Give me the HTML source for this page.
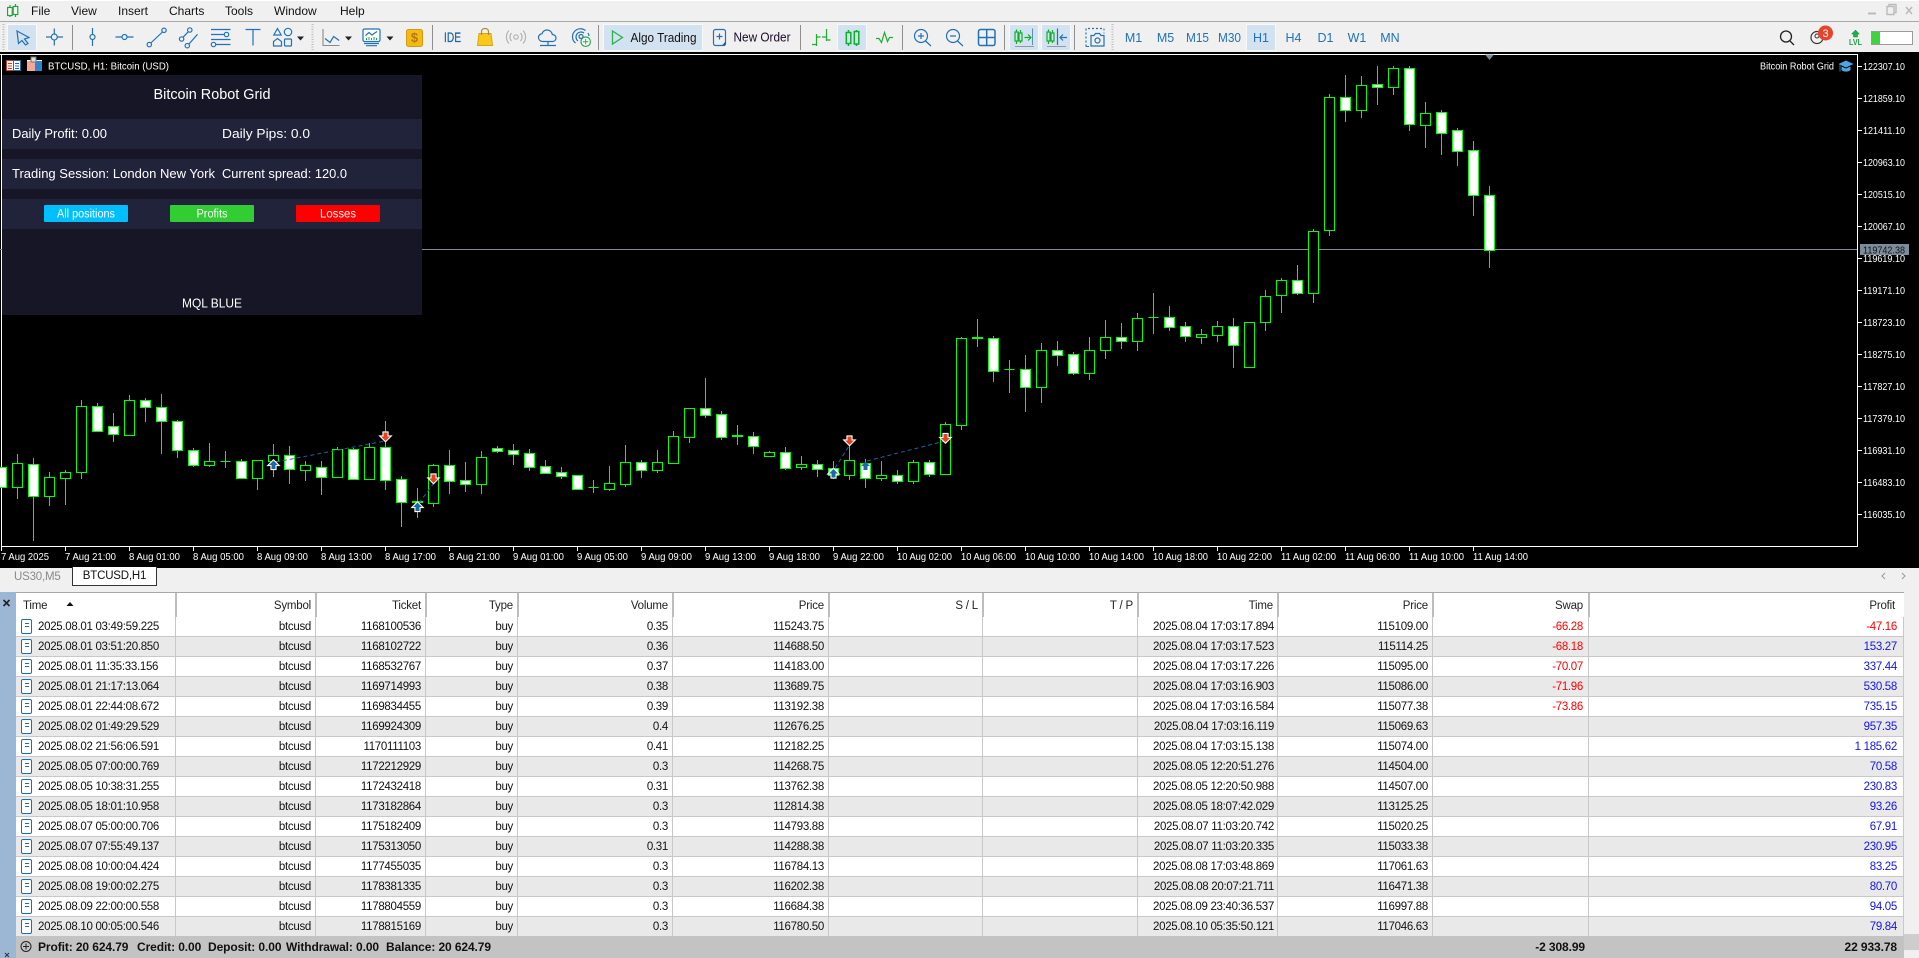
<!DOCTYPE html>
<html lang="en"><head><meta charset="utf-8"><title>MetaTrader 5</title>
<style>
html,body{margin:0;padding:0;background:#f0f0f0}
body{width:1919px;height:958px;position:relative;overflow:hidden;font-family:"Liberation Sans",sans-serif;color:#111}
svg{position:absolute;left:0;top:0;display:block}
svg text{font-family:"Liberation Sans",sans-serif}
.m{font-size:12px;fill:#111}
.tf{font-size:12.5px;fill:#2272b4;text-anchor:middle}
.p{font-size:10.5px;fill:#fff}
.pn{font-size:12.5px;fill:#fff}
.a{position:absolute}
#side{left:0;top:592px;width:16px;height:366px;background:#9cb7d4}
#head{left:16px;top:592px;width:1888px;height:25px;background:#fff;border-top:1px solid #a8a8a8;box-sizing:border-box}
#head span{position:absolute;top:0;height:24px;line-height:26px;font-size:11.5px;letter-spacing:-.2px;text-align:right;color:#222;border-right:2px solid #bdbdbd;box-sizing:border-box;padding-right:4px}
table{position:absolute;left:16px;top:617px;width:1888px;border-collapse:separate;border-spacing:0;table-layout:fixed;font-size:11.5px;letter-spacing:-.3px;background:#fff}
td{height:17px;padding:2px 4px 0 0;border-right:1px solid #c8c8c8;border-bottom:1px solid #c8c8c8;text-align:right;white-space:nowrap;line-height:17px;box-sizing:content-box;color:#111}
tr:nth-child(even) td{background:#e9e9e9}
td:first-child{text-align:left;padding:2px 0 0 22px;position:relative}
td:first-child i{position:absolute;left:5px;top:2px;width:9px;height:13px;border:1px solid #1f6fb0;border-radius:2px;background:#fff}
td:first-child i:before{content:"";position:absolute;left:2.5px;top:3px;width:4px;height:2px;border-top:1px solid #1f6fb0;border-bottom:1px solid #1f6fb0}
td:nth-child(9){padding-right:3px}td:nth-child(11){padding-right:5px}td:nth-child(12){padding-right:6px}
.r{color:#f00}.b{color:#1414e6}
#foot{left:16px;top:936px;width:1888px;height:22px;background:#c3c3c3;font-weight:bold;font-size:12px;letter-spacing:-.1px;line-height:22px}
#foot span{position:absolute;top:0;white-space:nowrap}
#tab{left:72px;top:567px;width:83px;height:18px;background:#fff;border:1px solid #333;border-top:0;text-align:center;font-size:11.5px;line-height:19px;letter-spacing:-.2px}
#us{left:14px;top:568px;font-size:11.5px;line-height:18px;color:#8a8a8a;letter-spacing:-.2px}
#sb{left:1904px;top:592px;width:15px;height:366px;background:#f0f0f0}
#th{left:1904px;top:934px;width:15px;height:16px;background:#cdcdcd}
</style></head><body>

<svg width="1919" height="568" viewBox="0 0 1919 568">
<rect x="0" y="0" width="1919" height="1" fill="#fff"/>
<rect x="0" y="21" width="1919" height="1" fill="#a9a9a9"/>
<!-- app icon -->
<g fill="none" stroke="#1fa535" stroke-width="1.2"><path d="M10 5V17M15.5 4V17"/><rect x="7.6" y="7.5" width="4.6" height="8" fill="#fff"/><rect x="13.2" y="6.5" width="4.6" height="8" fill="#fff"/></g>
<text class="m" x="31" y="15">File</text><text class="m" x="71" y="15">View</text><text class="m" x="118" y="15">Insert</text><text class="m" x="169" y="15">Charts</text><text class="m" x="225" y="15">Tools</text><text class="m" x="274" y="15">Window</text><text class="m" x="340" y="15">Help</text>
<!-- window controls -->
<path d="M1868 13.5h8" stroke="#bbb" stroke-width="2"/><path d="M1887 6.5h7v8h-7zM1889 6.5v-2h7v8h-2" fill="none" stroke="#bbb" stroke-width="1.4"/><path d="M1906 7l6 7M1912 7l-6 7" stroke="#bbb" stroke-width="1.6"/>
<!-- grips -->
<g stroke="#bcbcbc" stroke-width="2" stroke-dasharray="1 1.5"><path d="M3.5 24V51M312.5 24V51M1112.5 24V51"/></g>
<!-- active buttons -->
<g fill="#d3e2f0" stroke="#f6f9fc"><rect x="7.5" y="24.5" width="29" height="26"/><rect x="603.5" y="24.5" width="99" height="26"/><rect x="837.5" y="24.5" width="29" height="26"/><rect x="1009.5" y="24.5" width="29" height="26"/><rect x="1041.5" y="24.5" width="29" height="26"/><rect x="1246.5" y="24.5" width="29" height="26"/></g>
<!-- separators -->
<g stroke="#8f8f8f"><path d="M72.5 25V50M432.5 25V50M598.5 25V50M800.5 25V50M902.5 25V50M1004.5 25V50M1074.5 25V50"/></g>
<g fill="none" stroke="#2272b4" stroke-width="1.2">
<path d="M17 31L29 37.5 24.5 39 28 43.5 25.5 45 22 40.5 18.5 43.5Z" fill="#d3e2f0"/>
<path d="M46 37H51M57.5 37H63M54.3 28.5V34M54.3 40V45.5"/><circle cx="54.3" cy="37" r="3"/>
<path d="M92.5 28V34.5M92.5 39.5V46"/><circle cx="92.5" cy="37" r="2.5"/>
<path d="M115.5 37H122M127 37H133.5"/><circle cx="124.5" cy="37" r="2.5"/>
<path d="M150.8 43L162.5 32"/><circle cx="149.3" cy="44.6" r="2.2"/><circle cx="164" cy="30.3" r="2.2"/>
<path d="M183 37.3L188.2 31.8M189 44L197.5 34.3"/><circle cx="181.6" cy="39" r="2.2"/><circle cx="189.8" cy="30" r="2.2"/><circle cx="187.3" cy="45.7" r="2.2"/>
<path d="M211 29.5H230.5M211 34.5H224M211 39.5H230.5M216 44.5H230.5"/><circle cx="226.5" cy="34.5" r="2.2"/><circle cx="213.5" cy="44.5" r="2.2"/>
<path d="M245.5 29.5H260.5M253 29.5V45.5"/>
<path d="M277.5 28.5l3.7 6.5h-7.4z"/><circle cx="288" cy="32" r="3.7"/><path d="M277.5 38.5l4 3v4.5h-8v-4.5z"/><rect x="284.5" y="39" width="7" height="7" rx="1"/>
<path d="M325 38.5l5 4 3.7-6 5.5 4"/>
<rect x="363" y="29" width="17" height="12.5" rx="1.5" fill="#fff"/><path d="M364 43.5H379M366 45.7H377"/><path d="M365.5 35.5l3.5-3 3 2.5 5-3.5"/>
<path d="M543 41.5c-3 0-4.500-2-4.500-4 0-2.200 1.700-3.700 3.500-3.700 .7-2.300 2.700-3.800 5-3.800 2.800 0 5 2 5.300 4.500 2.200 0 3.700 1.700 3.700 3.500 0 2-1.500 3.500-3.500 3.500z"/><path d="M548 41.500V45M540 45.500H556"/>
<path d="M575.500 43a8 8 0 0 1 10-12.500M578 41a5 5 0 0 1 6-8"/><circle cx="581" cy="36.500" r="2"/><path d="M588 33a8 8 0 0 1 1 3"/>
<rect x="713.500" y="29.500" width="12" height="16" rx="2"/><path d="M716.500 36.500h6M719.500 33.500v6"/>
<circle cx="921" cy="36" r="6.500"/><path d="M925.500 41L931 46M918 36h6M921 33v6"/>
<circle cx="953" cy="36" r="6.500"/><path d="M957.500 41L963 46M950 36h6"/>
<rect x="978.500" y="29.500" width="16.500" height="16" rx="2" stroke-width="1.500"/><path d="M986.700 29.500V45.500M978.500 37.500H995" stroke-width="1.500"/>
<path d="M1067 37.500h-6.500M1063 34.500l-3 3 3 3M1057.500 28.500V45"/>
<path d="M1091 35.500h3l1.500-2h4l1.500 2h3v10.500h-13z"/><circle cx="1097.500" cy="40.500" r="2.500"/>
</g>
<path d="M1086 46.500V28.500H1104" fill="none" stroke="#2272b4" stroke-width="1.200" stroke-dasharray="2 2"/><path d="M1104 28.500v5" fill="none" stroke="#2272b4" stroke-dasharray="2 2"/><path d="M1086 46.500h3" stroke="#2272b4"/>
<path d="M1032.500 28.500V45" stroke="#5f8fb0" fill="none"/>
<path d="M323 29V45.500H339.500" fill="none" stroke="#8a8a8a" stroke-width="1.100"/>
<g fill="#222"><path d="M297 36.500h7l-3.500 4zM345 36.500h7l-3.500 4zM386.500 36.500h7l-3.500 4z"/></g>
<path d="M366.500 40v-2M369 40v-3M371.500 40v-2M374 40v-3M376.500 40v-2" stroke="#1fa535"/>
<rect x="406.500" y="29.500" width="16" height="17" rx="2" fill="#f4b915" stroke="#d39b10"/>
<text x="414.500" y="42" font-size="13" font-weight="bold" fill="#b57a0a" text-anchor="middle">$</text>
<text x="444" y="42" font-size="13.500" fill="#1c66a8" stroke="#1c66a8" stroke-width=".25" textLength="17" lengthAdjust="spacingAndGlyphs">IDE</text>
<path d="M477.500 45.500L479 33.500H491L492.500 45.500Z" fill="#f6c91b" stroke="#d6a512"/><path d="M481.500 35V31.500c0-4 7-4 7 0V35" fill="none" stroke="#a88d3a" stroke-width="1.200"/>
<g fill="none" stroke="#b3b3b3" stroke-width="1.200"><circle cx="516" cy="37" r="2.200"/><path d="M511.500 33a6 6 0 0 0 0 8M520.500 33a6 6 0 0 1 0 8M509 30.500a9.500 9.500 0 0 0 0 13M523 30.500a9.500 9.500 0 0 1 0 13"/></g>
<circle cx="585.700" cy="41.700" r="4.700" fill="#fff" stroke="#2ba84a" stroke-width="1.200"/><path d="M585.700 39v5.400M583 41.700h5.400" stroke="#2ba84a"/>
<path d="M612.500 31L622.500 37.500 612.500 44Z" fill="none" stroke="#2bb24c" stroke-width="1.300"/>
<text x="630.500" y="42" font-size="12.500" fill="#111" textLength="66" lengthAdjust="spacingAndGlyphs">Algo Trading</text>
<path d="M722 45.500l3.500-4v4z" fill="#1c5c94"/>
<text x="733.500" y="41.500" font-size="12.500" fill="#1a0a2a" textLength="57" lengthAdjust="spacingAndGlyphs">New Order</text>
<!-- bars -->
<g fill="none" stroke="#1fb02e" stroke-width="1.200"><path d="M816.500 34V46M812 44.500h4.500M816.500 37h4M826.500 29V41M822 37h4.500M826.500 40h4"/></g>
<g fill="none" stroke="#0fae2b" stroke-width="1.500"><path d="M848.500 30V46M856.500 30V46"/><rect x="846.300" y="32.500" width="4.500" height="11" fill="#d3e2f0"/><rect x="854.300" y="31.500" width="4.500" height="12.500" fill="#d3e2f0"/></g>
<path d="M876 38.500h3l2.500 4 3-10 3 9 2-4h3.500" fill="none" stroke="#1fb02e" stroke-width="1.200"/>
<g fill="none" stroke="#0fae2b" stroke-width="1.200"><path d="M1016.500 29.500V44M1020.500 30V43"/><rect x="1015" y="32" width="3" height="9" fill="#d3e2f0"/><rect x="1019" y="33" width="3" height="8" fill="#d3e2f0"/><path d="M1024.500 37.500H1031M1028 34.500l3 3-3 3"/><path d="M1048.500 29.500V44M1052.500 30V43"/><rect x="1047" y="32" width="3" height="9" fill="#d3e2f0"/><rect x="1051" y="33" width="3" height="8" fill="#d3e2f0"/></g>
<path d="M1015 46.500H1034M1047 46.500H1066" stroke="#8e9aa6"/>
<!-- timeframes -->
<text class="tf" x="1133.500" y="42" >M1</text><text class="tf" x="1165.500" y="42">M5</text><text class="tf" x="1197.500" y="42" textLength="23" lengthAdjust="spacingAndGlyphs">M15</text><text class="tf" x="1229.500" y="42" textLength="23" lengthAdjust="spacingAndGlyphs">M30</text><text class="tf" x="1261" y="42">H1</text><text class="tf" x="1293.500" y="42">H4</text><text class="tf" x="1325.500" y="42">D1</text><text class="tf" x="1357" y="42">W1</text><text class="tf" x="1390" y="42">MN</text>
<!-- right widgets -->
<circle cx="1786" cy="36.500" r="5.500" fill="none" stroke="#222" stroke-width="1.300"/><path d="M1790 41L1794 45" stroke="#222" stroke-width="1.300"/>
<circle cx="1817" cy="37.500" r="6" fill="none" stroke="#333" stroke-width="1.200"/><circle cx="1817" cy="36" r="2" fill="none" stroke="#333"/>
<circle cx="1825.500" cy="33" r="7.500" fill="#e8432d"/><text x="1825.500" y="37" font-size="11" fill="#fff" text-anchor="middle">3</text>
<path d="M1855.500 30l4 4h-2v3h-4v-3h-2z" fill="#1fb04a" stroke="#148a38" stroke-width=".5"/><text x="1849" y="45" font-size="8.500" font-weight="bold" fill="#1fa04a" textLength="13" lengthAdjust="spacingAndGlyphs">LVL</text>
<rect x="1871.500" y="31.500" width="41" height="13" fill="#fff" stroke="#9a9a9a"/><rect x="1872" y="32" width="8" height="12" fill="#3dd43d"/>

<!-- chart -->
<rect x="0" y="52" width="1919" height="516" fill="#000"/>
<g shape-rendering="crispEdges">
<path d="M0 54.500H1857.500V546.500H1.500V54.500" fill="none" stroke="#fff"/>
<path d="M0 249.500H1857" stroke="#808c99"/>
<path fill="none" stroke="#fff" d="M1858 66.500h4M1858 98.500h4M1858 130.500h4M1858 162.500h4M1858 194.500h4M1858 226.500h4M1858 258.500h4M1858 290.500h4M1858 322.500h4M1858 354.500h4M1858 386.500h4M1858 418.500h4M1858 450.500h4M1858 482.500h4M1858 514.500h4M1.500 547v4M65.500 547v4M129.500 547v4M193.500 547v4M257.500 547v4M321.500 547v4M385.500 547v4M449.500 547v4M513.500 547v4M577.500 547v4M641.500 547v4M705.500 547v4M769.500 547v4M833.500 547v4M897.500 547v4M961.500 547v4M1025.500 547v4M1089.500 547v4M1153.500 547v4M1217.500 547v4M1281.500 547v4M1345.500 547v4M1409.500 547v4M1473.500 547v4"/>
<path fill="none" stroke="#00ff00" d="M17.500 454V499M33.500 458V541M49.500 472V506M65.500 470V505M81.500 400V479M97.500 403V432M113.500 413V442M129.500 395V436M145.500 398V422M161.500 394V454M177.500 420V458M193.500 448V467M209.500 443V467M225.500 451V468M241.500 459V479M257.500 460V490M273.500 444V477M289.500 446V484M305.500 461V481M321.500 461V495M337.500 447V477M353.500 448V479M369.500 443V479M385.500 421V490M401.500 476V527M417.500 488V518M433.500 464V507M449.500 450V494M465.500 462V492M481.500 451V494M497.500 446V453M513.500 444V465M529.500 449V471M545.500 460V474M561.500 467V479M577.500 475V490M593.500 480V493M609.500 466V491M625.500 445V487M641.500 460V478M657.500 450V473M673.500 431V463M689.500 408V443M705.500 378V418M721.500 411V440M737.500 425V445M753.500 432V454M769.500 451V457M785.500 447V470M801.500 456V470M817.500 460V477M833.500 461V479M849.500 445V480M865.500 459V488M881.500 461V481M897.500 470V484M913.500 460V484M929.500 460V477M945.500 422V475M961.500 337V430M977.500 319V347M993.500 336V382M1009.500 360V393M1025.500 355V412M1041.500 343V403M1057.500 341V366M1073.500 352V375M1089.500 337V380M1105.500 320V359M1121.500 323V349M1137.500 313V351M1153.500 293V334M1169.500 306V331M1185.500 322V342M1201.500 329V344M1217.500 321V342M1233.500 318V368M1249.500 322V367M1265.500 290V331M1281.500 278V313M1297.500 265V295M1313.500 229V303M1329.500 94V236M1345.500 75V122M1361.500 76V118M1377.500 66V105M1393.500 66V95M1409.500 66V131M1425.500 102V148M1441.500 110V155M1457.500 128V166M1473.500 141V216M1489.500 186V268M220.500 461.500h10M588.500 487.500h10M1004.500 369.500h10M1148.500 317.500h10"/>
<path fill="#000" stroke="#00ff00" d="M12.500 463.500h10v24h-10zM44.500 477.500h10v19h-10zM60.500 472.500h10v6h-10zM76.500 406.500h10v66h-10zM124.500 400.500h10v35h-10zM204.500 461.500h10v4h-10zM252.500 460.500h10v18h-10zM268.500 455.500h10v6h-10zM300.500 465.500h10v5h-10zM332.500 449.500h10v28h-10zM364.500 447.500h10v32h-10zM428.500 465.500h10v38h-10zM476.500 457.500h10v27h-10zM604.500 483.500h10v6h-10zM620.500 462.500h10v22h-10zM652.500 462.500h10v8h-10zM668.500 436.500h10v27h-10zM684.500 408.500h10v29h-10zM764.500 452.500h10v4h-10zM796.500 464.500h10v3h-10zM844.500 460.500h10v15h-10zM876.500 475.500h10v3h-10zM908.500 462.500h10v19h-10zM940.500 424.500h10v50h-10zM956.500 338.500h10v87h-10zM1036.500 350.500h10v37h-10zM1084.500 350.500h10v23h-10zM1100.500 337.500h10v13h-10zM1132.500 318.500h10v23h-10zM1196.500 334.500h10v3h-10zM1212.500 326.500h10v9h-10zM1244.500 322.500h10v45h-10zM1260.500 296.500h10v26h-10zM1276.500 280.500h10v15h-10zM1308.500 231.500h10v62h-10zM1324.500 97.500h10v133h-10zM1356.500 85.500h10v25h-10zM1388.500 68.500h10v19h-10zM1420.500 113.500h10v12h-10z"/>
<path fill="#fff" stroke="#00ff00" d="M-3.500 467.500h10v20h-10zM28.500 464.500h10v32h-10zM92.500 406.500h10v25h-10zM108.500 426.500h10v8h-10zM140.500 400.500h10v7h-10zM156.500 407.500h10v14h-10zM172.500 421.500h10v29h-10zM188.500 450.500h10v15h-10zM236.500 461.500h10v17h-10zM284.500 455.500h10v14h-10zM316.500 467.500h10v10h-10zM348.500 449.500h10v30h-10zM380.500 447.500h10v33h-10zM396.500 479.500h10v23h-10zM444.500 465.500h10v16h-10zM460.500 480.500h10v4h-10zM492.500 448.500h10v3h-10zM508.500 450.500h10v4h-10zM524.500 453.500h10v14h-10zM540.500 466.500h10v7h-10zM556.500 472.500h10v4h-10zM572.500 475.500h10v14h-10zM636.500 462.500h10v8h-10zM700.500 408.500h10v7h-10zM716.500 414.500h10v23h-10zM748.500 436.500h10v10h-10zM780.500 452.500h10v16h-10zM812.500 464.500h10v5h-10zM828.500 468.500h10v7h-10zM860.500 463.500h10v15h-10zM892.500 475.500h10v6h-10zM924.500 462.500h10v12h-10zM988.500 338.500h10v33h-10zM1020.500 369.500h10v18h-10zM1052.500 350.500h10v5h-10zM1068.500 354.500h10v19h-10zM1116.500 337.500h10v4h-10zM1164.500 317.500h10v10h-10zM1180.500 326.500h10v10h-10zM1228.500 326.500h10v19h-10zM1292.500 280.500h10v13h-10zM1340.500 97.500h10v13h-10zM1372.500 84.500h10v3h-10zM1404.500 68.500h10v56h-10zM1436.500 112.500h10v21h-10zM1452.500 130.500h10v21h-10zM1468.500 150.500h10v45h-10zM1484.500 195.500h10v55h-10z"/>
<path fill="#00ff00" stroke="#00ff00" d="M412.500 501.500h10v1h-10zM732.500 435.500h10v1h-10zM972.500 337.500h10v1h-10z"/>
</g>
<!-- trade lines -->
<g fill="none" stroke="#1d62a8" stroke-width="1" stroke-dasharray="4 3"><path d="M276 462L385 441M419 503L434 483M835 468L849 446M867 461L945 441"/></g>
<!-- markers -->
<g stroke="#fff" stroke-width="2.200" stroke-linejoin="miter" paint-order="stroke">
<path fill="#1a6aa8" transform="translate(273.500 465)" d="M0-4.500L4.500 0H2V4H-2V0H-4.500Z"/>
<path fill="#1a6aa8" transform="translate(417.500 507)" d="M0-4.500L4.500 0H2V4H-2V0H-4.500Z"/>
<path fill="#1a6aa8" transform="translate(833.500 473.500)" d="M0-4.500L4.500 0H2V4H-2V0H-4.500Z"/>
<path fill="#1a6aa8" transform="translate(865.500 466)" d="M0-4.500L4.500 0H2V4H-2V0H-4.500Z" stroke="none"/>
<path fill="#e5431f" transform="translate(385.500 436.500)" d="M-2-4H2V0H4.500L0 4.500-4.500 0H-2Z"/>
<path fill="#e5431f" transform="translate(433.500 478.500)" d="M-2-4H2V0H4.500L0 4.500-4.500 0H-2Z"/>
<path fill="#e5431f" transform="translate(849.500 440.500)" d="M-2-4H2V0H4.500L0 4.500-4.500 0H-2Z"/>
<path fill="#e5431f" transform="translate(945.500 438)" d="M-2-4H2V0H4.500L0 4.500-4.500 0H-2Z"/>
</g>
<path d="M1485 54.500h9l-4.500 5.500z" fill="#7a8a99"/>
<!-- chart header icons -->
<g shape-rendering="crispEdges"><rect x="6.500" y="60.500" width="7" height="10" fill="#fff" stroke="#d8392b"/><rect x="13.500" y="60.500" width="7" height="10" fill="#fff" stroke="#1c6db0"/><path d="M8 63.500h4M8 66h4M8 68.500h4" stroke="#d8392b"/><path d="M15 63.500h4M15 66h4M15 68.500h4" stroke="#1c6db0"/>
<rect x="27" y="61" width="8" height="10" fill="#f7a79a"/><rect x="35" y="61" width="7" height="10" fill="#2c86cf"/><path d="M27 60.500h15" stroke="#fff"/><rect x="31" y="57" width="5" height="5" fill="#ddd" stroke="#777"/></g>
<text class="p" x="48" y="69.500" textLength="121" lengthAdjust="spacingAndGlyphs">BTCUSD, H1:  Bitcoin (USD)</text>
<text class="p" x="1760" y="69.500" textLength="74" lengthAdjust="spacingAndGlyphs">Bitcoin Robot Grid</text>
<path d="M1846 60.500l7.500 3.500-7.500 3.500-7.500-3.500zM1841.500 66.500v3.500c2 2.200 7 2.200 9 0v-3.500l-4.500 2z" fill="#4ea3e0"/><path d="M1840 64.500v7" stroke="#2c6ea8"/>
<!-- price labels -->
<g><text class="p" x="1863" y="70" textLength="42" lengthAdjust="spacingAndGlyphs">122307.10</text><text class="p" x="1863" y="102" textLength="42" lengthAdjust="spacingAndGlyphs">121859.10</text><text class="p" x="1863" y="134" textLength="42" lengthAdjust="spacingAndGlyphs">121411.10</text><text class="p" x="1863" y="166" textLength="42" lengthAdjust="spacingAndGlyphs">120963.10</text><text class="p" x="1863" y="198" textLength="42" lengthAdjust="spacingAndGlyphs">120515.10</text><text class="p" x="1863" y="230" textLength="42" lengthAdjust="spacingAndGlyphs">120067.10</text><text class="p" x="1863" y="262" textLength="42" lengthAdjust="spacingAndGlyphs">119619.10</text><text class="p" x="1863" y="294" textLength="42" lengthAdjust="spacingAndGlyphs">119171.10</text><text class="p" x="1863" y="326" textLength="42" lengthAdjust="spacingAndGlyphs">118723.10</text><text class="p" x="1863" y="358" textLength="42" lengthAdjust="spacingAndGlyphs">118275.10</text><text class="p" x="1863" y="390" textLength="42" lengthAdjust="spacingAndGlyphs">117827.10</text><text class="p" x="1863" y="422" textLength="42" lengthAdjust="spacingAndGlyphs">117379.10</text><text class="p" x="1863" y="454" textLength="42" lengthAdjust="spacingAndGlyphs">116931.10</text><text class="p" x="1863" y="486" textLength="42" lengthAdjust="spacingAndGlyphs">116483.10</text><text class="p" x="1863" y="518" textLength="42" lengthAdjust="spacingAndGlyphs">116035.10</text></g>
<rect x="1860" y="244" width="49" height="11" fill="#7d8b9a"/>
<text class="p" style="fill:#111" x="1863" y="253.500" textLength="42" lengthAdjust="spacingAndGlyphs">119742.38</text>
<!-- time labels -->
<g><text class="p" x="1" y="560" textLength="48" lengthAdjust="spacingAndGlyphs">7 Aug 2025</text><text class="p" x="65" y="560" textLength="51" lengthAdjust="spacingAndGlyphs">7 Aug 21:00</text><text class="p" x="129" y="560" textLength="51" lengthAdjust="spacingAndGlyphs">8 Aug 01:00</text><text class="p" x="193" y="560" textLength="51" lengthAdjust="spacingAndGlyphs">8 Aug 05:00</text><text class="p" x="257" y="560" textLength="51" lengthAdjust="spacingAndGlyphs">8 Aug 09:00</text><text class="p" x="321" y="560" textLength="51" lengthAdjust="spacingAndGlyphs">8 Aug 13:00</text><text class="p" x="385" y="560" textLength="51" lengthAdjust="spacingAndGlyphs">8 Aug 17:00</text><text class="p" x="449" y="560" textLength="51" lengthAdjust="spacingAndGlyphs">8 Aug 21:00</text><text class="p" x="513" y="560" textLength="51" lengthAdjust="spacingAndGlyphs">9 Aug 01:00</text><text class="p" x="577" y="560" textLength="51" lengthAdjust="spacingAndGlyphs">9 Aug 05:00</text><text class="p" x="641" y="560" textLength="51" lengthAdjust="spacingAndGlyphs">9 Aug 09:00</text><text class="p" x="705" y="560" textLength="51" lengthAdjust="spacingAndGlyphs">9 Aug 13:00</text><text class="p" x="769" y="560" textLength="51" lengthAdjust="spacingAndGlyphs">9 Aug 18:00</text><text class="p" x="833" y="560" textLength="51" lengthAdjust="spacingAndGlyphs">9 Aug 22:00</text><text class="p" x="897" y="560" textLength="55" lengthAdjust="spacingAndGlyphs">10 Aug 02:00</text><text class="p" x="961" y="560" textLength="55" lengthAdjust="spacingAndGlyphs">10 Aug 06:00</text><text class="p" x="1025" y="560" textLength="55" lengthAdjust="spacingAndGlyphs">10 Aug 10:00</text><text class="p" x="1089" y="560" textLength="55" lengthAdjust="spacingAndGlyphs">10 Aug 14:00</text><text class="p" x="1153" y="560" textLength="55" lengthAdjust="spacingAndGlyphs">10 Aug 18:00</text><text class="p" x="1217" y="560" textLength="55" lengthAdjust="spacingAndGlyphs">10 Aug 22:00</text><text class="p" x="1281" y="560" textLength="55" lengthAdjust="spacingAndGlyphs">11 Aug 02:00</text><text class="p" x="1345" y="560" textLength="55" lengthAdjust="spacingAndGlyphs">11 Aug 06:00</text><text class="p" x="1409" y="560" textLength="55" lengthAdjust="spacingAndGlyphs">11 Aug 10:00</text><text class="p" x="1473" y="560" textLength="55" lengthAdjust="spacingAndGlyphs">11 Aug 14:00</text></g>
<!-- panel -->
<rect x="2" y="75" width="420" height="240" fill="#161626"/>
<rect x="2" y="119" width="420" height="30" fill="#20233a"/><rect x="2" y="159" width="420" height="30" fill="#20233a"/><rect x="2" y="199" width="420" height="30" fill="#20233a"/>
<text class="pn" x="153.500" y="99" style="font-size:14.500px" textLength="117" lengthAdjust="spacingAndGlyphs">Bitcoin Robot Grid</text>
<text class="pn" x="12" y="138" textLength="95" lengthAdjust="spacingAndGlyphs">Daily Profit: 0.00</text>
<text class="pn" x="222" y="138" textLength="88" lengthAdjust="spacingAndGlyphs">Daily Pips:  0.0</text>
<text class="pn" x="12" y="178" textLength="203" lengthAdjust="spacingAndGlyphs">Trading Session: London New York</text>
<text class="pn" x="222" y="178" textLength="125" lengthAdjust="spacingAndGlyphs">Current spread: 120.0</text>
<rect x="44" y="205" width="84" height="17" rx="1" fill="#00bfff"/><rect x="170" y="205" width="84" height="17" rx="1" fill="#32cd32"/><rect x="296" y="205" width="84" height="17" rx="1" fill="#ff0000"/>
<text x="86" y="217.500" font-size="11.500" fill="#fff" text-anchor="middle" textLength="58" lengthAdjust="spacingAndGlyphs">All positions</text>
<text x="212" y="217.500" font-size="11.500" fill="#fff" text-anchor="middle" textLength="31" lengthAdjust="spacingAndGlyphs">Profits</text>
<text x="338" y="217.500" font-size="11.500" fill="#fff" text-anchor="middle" textLength="36" lengthAdjust="spacingAndGlyphs">Losses</text>
<text class="pn" x="182" y="307.500" textLength="60" lengthAdjust="spacingAndGlyphs">MQL BLUE</text>
</svg>

<!-- tabs -->
<div class="a" id="us">US30,M5</div>
<div class="a" id="tab">BTCUSD,H1</div>
<div class="a" id="side"></div>
<div class="a" id="sb"></div><div class="a" id="th"></div>
<div class="a" id="head">
<span style="left:0;width:160.500px;text-align:left;padding-left:7px">Time</span>
<span style="left:160px;width:141px">Symbol</span>
<span style="left:301px;width:110px">Ticket</span>
<span style="left:411px;width:92px">Type</span>
<span style="left:503px;width:155px">Volume</span>
<span style="left:658px;width:156px">Price</span>
<span style="left:814px;width:154px">S / L</span>
<span style="left:968px;width:155px">T / P</span>
<span style="left:1123px;width:140px">Time</span>
<span style="left:1263px;width:155px">Price</span>
<span style="left:1418px;width:156px;padding-right:5px">Swap</span>
<span style="left:1574px;width:314px;border-right:0;padding-right:9px">Profit</span>
</div>
<table>
<colgroup><col style="width:160px"><col style="width:140px"><col style="width:110px"><col style="width:92px"><col style="width:155px"><col style="width:156px"><col style="width:154px"><col style="width:155px"><col style="width:140px"><col style="width:155px"><col style="width:156px"><col style="width:315px"></colgroup>
<tr><td><i></i>2025.08.01 03:49:59.225</td><td>btcusd</td><td>1168100536</td><td>buy</td><td>0.35</td><td>115243.75</td><td></td><td></td><td>2025.08.04 17:03:17.894</td><td>115109.00</td><td class="r">-66.28</td><td class="r">-47.16</td></tr>
<tr><td><i></i>2025.08.01 03:51:20.850</td><td>btcusd</td><td>1168102722</td><td>buy</td><td>0.36</td><td>114688.50</td><td></td><td></td><td>2025.08.04 17:03:17.523</td><td>115114.25</td><td class="r">-68.18</td><td class="b">153.27</td></tr>
<tr><td><i></i>2025.08.01 11:35:33.156</td><td>btcusd</td><td>1168532767</td><td>buy</td><td>0.37</td><td>114183.00</td><td></td><td></td><td>2025.08.04 17:03:17.226</td><td>115095.00</td><td class="r">-70.07</td><td class="b">337.44</td></tr>
<tr><td><i></i>2025.08.01 21:17:13.064</td><td>btcusd</td><td>1169714993</td><td>buy</td><td>0.38</td><td>113689.75</td><td></td><td></td><td>2025.08.04 17:03:16.903</td><td>115086.00</td><td class="r">-71.96</td><td class="b">530.58</td></tr>
<tr><td><i></i>2025.08.01 22:44:08.672</td><td>btcusd</td><td>1169834455</td><td>buy</td><td>0.39</td><td>113192.38</td><td></td><td></td><td>2025.08.04 17:03:16.584</td><td>115077.38</td><td class="r">-73.86</td><td class="b">735.15</td></tr>
<tr><td><i></i>2025.08.02 01:49:29.529</td><td>btcusd</td><td>1169924309</td><td>buy</td><td>0.4</td><td>112676.25</td><td></td><td></td><td>2025.08.04 17:03:16.119</td><td>115069.63</td><td></td><td class="b">957.35</td></tr>
<tr><td><i></i>2025.08.02 21:56:06.591</td><td>btcusd</td><td>1170111103</td><td>buy</td><td>0.41</td><td>112182.25</td><td></td><td></td><td>2025.08.04 17:03:15.138</td><td>115074.00</td><td></td><td class="b">1 185.62</td></tr>
<tr><td><i></i>2025.08.05 07:00:00.769</td><td>btcusd</td><td>1172212929</td><td>buy</td><td>0.3</td><td>114268.75</td><td></td><td></td><td>2025.08.05 12:20:51.276</td><td>114504.00</td><td></td><td class="b">70.58</td></tr>
<tr><td><i></i>2025.08.05 10:38:31.255</td><td>btcusd</td><td>1172432418</td><td>buy</td><td>0.31</td><td>113762.38</td><td></td><td></td><td>2025.08.05 12:20:50.988</td><td>114507.00</td><td></td><td class="b">230.83</td></tr>
<tr><td><i></i>2025.08.05 18:01:10.958</td><td>btcusd</td><td>1173182864</td><td>buy</td><td>0.3</td><td>112814.38</td><td></td><td></td><td>2025.08.05 18:07:42.029</td><td>113125.25</td><td></td><td class="b">93.26</td></tr>
<tr><td><i></i>2025.08.07 05:00:00.706</td><td>btcusd</td><td>1175182409</td><td>buy</td><td>0.3</td><td>114793.88</td><td></td><td></td><td>2025.08.07 11:03:20.742</td><td>115020.25</td><td></td><td class="b">67.91</td></tr>
<tr><td><i></i>2025.08.07 07:55:49.137</td><td>btcusd</td><td>1175313050</td><td>buy</td><td>0.31</td><td>114288.38</td><td></td><td></td><td>2025.08.07 11:03:20.335</td><td>115033.38</td><td></td><td class="b">230.95</td></tr>
<tr><td><i></i>2025.08.08 10:00:04.424</td><td>btcusd</td><td>1177455035</td><td>buy</td><td>0.3</td><td>116784.13</td><td></td><td></td><td>2025.08.08 17:03:48.869</td><td>117061.63</td><td></td><td class="b">83.25</td></tr>
<tr><td><i></i>2025.08.08 19:00:02.275</td><td>btcusd</td><td>1178381335</td><td>buy</td><td>0.3</td><td>116202.38</td><td></td><td></td><td>2025.08.08 20:07:21.711</td><td>116471.38</td><td></td><td class="b">80.70</td></tr>
<tr><td><i></i>2025.08.09 22:00:00.558</td><td>btcusd</td><td>1178804559</td><td>buy</td><td>0.3</td><td>116684.38</td><td></td><td></td><td>2025.08.09 23:40:36.537</td><td>116997.88</td><td></td><td class="b">94.05</td></tr>
<tr><td><i></i>2025.08.10 00:05:00.546</td><td>btcusd</td><td>1178815169</td><td>buy</td><td>0.3</td><td>116780.50</td><td></td><td></td><td>2025.08.10 05:35:50.121</td><td>117046.63</td><td></td><td class="b">79.84</td></tr>
</table>
<div class="a" id="foot">
<span style="left:22px">Profit: 20 624.79</span><span style="left:121px">Credit: 0.00</span><span style="left:192px">Deposit: 0.00</span><span style="left:270px">Withdrawal: 0.00</span><span style="left:370px">Balance: 20 624.79</span>
<span style="right:319px">-2 308.99</span><span style="right:7px">22 933.78</span>
</div>
<svg width="1919" height="958" style="pointer-events:none;z-index:3" viewBox="0 0 1919 958">
<path d="M1885 573l-3 3 3 3M1902 573l3 3-3 3" fill="none" stroke="#9a9a9a"/>
<path d="M3.500 600l6 6M9.500 600l-6 6" stroke="#222" stroke-width="1.600"/>
<path d="M5 953l4 4M9 953l-4 4" stroke="#333"/>
<path d="M66.500 606l3.500-4 3.500 4z" fill="#111"/>
<circle cx="26" cy="946.500" r="5" fill="none" stroke="#222"/><path d="M23 946.500h6M26 943.500v6" stroke="#222"/>
</svg>
</body></html>
